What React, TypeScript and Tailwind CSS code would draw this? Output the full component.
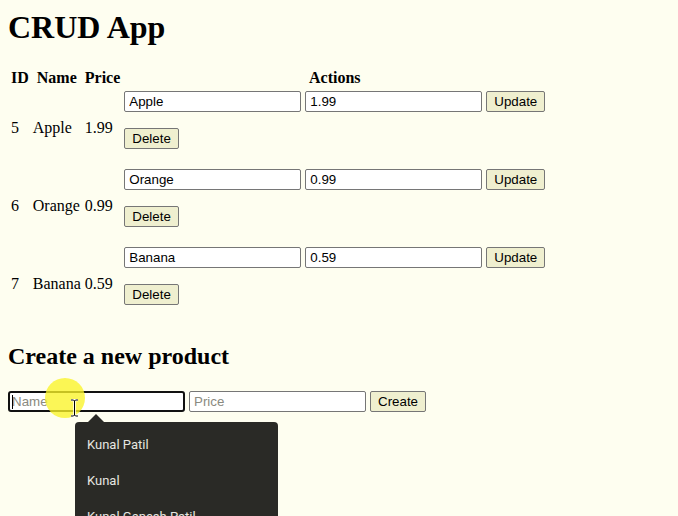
const products = [
  { id: 5, name: "Apple", price: "1.99" },
  { id: 6, name: "Orange", price: "0.99" },
  { id: 7, name: "Banana", price: "0.59" },
];

const suggestions = ["Kunal Patil", "Kunal", "Kunal Ganesh Patil"];

const field =
  "w-[177px] h-[21px] border border-[#767676] rounded-[2px] bg-white px-1 text-[13.33px] text-black font-['Liberation_Sans',Arial,sans-serif] outline-none placeholder:text-[#8a8a80]";
const btn =
  "h-[21px] border border-[#767676] rounded-[2px] bg-[#efefcf] px-[7px] text-[13.33px] leading-none text-black font-['Liberation_Sans',Arial,sans-serif]";

export default function App() {
  return (
    <main className="h-screen overflow-hidden bg-[#fefef0] pl-2 pt-[9px] text-black font-['Liberation_Serif','Times_New_Roman',serif]">
      <h1 className="text-[32px] font-bold leading-[37px]">CRUD App</h1>

      <table className="mt-5 border-separate border-spacing-0.5">
        <thead>
          <tr>
            <th className="p-px text-center font-bold leading-[18px]">ID</th>
            <th className="p-px text-center font-bold leading-[18px]">Name</th>
            <th className="p-px text-center font-bold leading-[18px]">Price</th>
            <th className="p-px text-center font-bold leading-[18px]">Actions</th>
          </tr>
        </thead>
        <tbody>
          {products.map((p) => (
            <tr key={p.id}>
              <td className="p-px align-middle leading-[18px]">{p.id}</td>
              <td className="p-px align-middle leading-[18px]">{p.name}</td>
              <td className="p-px align-middle leading-[18px]">{p.price}</td>
              <td className="p-px align-top">
                <div className="flex flex-col items-start pb-4">
                  <div className="flex gap-1">
                    <input className={field} defaultValue={p.name} />
                    <input className={field} defaultValue={p.price} />
                    <button className={btn}>Update</button>
                  </div>
                  <button className={`${btn} mt-4`}>Delete</button>
                </div>
              </td>
            </tr>
          ))}
        </tbody>
      </table>

      <h2 className="mt-[18px] text-2xl font-bold leading-7">Create a new product</h2>

      <div className="relative mt-[21px] flex gap-1">
        <input
          className="w-[177px] h-[21px] border-2 border-[#111] rounded-[3px] bg-white pl-0.5 text-[13.33px] text-black font-['Liberation_Sans',Arial,sans-serif] outline-none placeholder:text-[#8a8a80]"
          placeholder="Name"
        />
        <input className={field} placeholder="Price" />
        <button className={btn}>Create</button>

        {/* text caret */}
        <div className="absolute left-[4px] top-[4px] h-[14px] w-px bg-black" />

        {/* click highlight */}
        <div className="absolute left-[37px] top-[-13px] h-10 w-10 rounded-full bg-[rgba(250,244,40,0.78)]" />

        {/* I-beam cursor */}
        <svg className="absolute left-[62px] top-[8px]" width="9" height="18" viewBox="0 0 9 18">
          <path d="M1 1h2.5L4.5 2 5.5 1H8M4.5 2v14M1 17h2.5l1-1 1 1H8" fill="none" stroke="#fff" strokeWidth="2.5" />
          <path d="M1 1h2.5L4.5 2 5.5 1H8M4.5 2v14M1 17h2.5l1-1 1 1H8" fill="none" stroke="#000" strokeWidth="1" />
        </svg>

        {/* autocomplete dropdown */}
        <div className="absolute left-[80px] top-[23px] h-0 w-0 border-x-8 border-b-8 border-x-transparent border-b-[#2a2a26]" />
        <div className="absolute left-[67px] top-[31px] h-[130px] w-[203px] rounded-[4px] bg-[#2a2a26] pt-[5px] font-['Roboto','Noto_Sans',sans-serif] text-[13px] text-[#e6e6e0]">
          {suggestions.map((s) => (
            <div key={s} className="flex h-9 items-center px-3">
              {s}
            </div>
          ))}
        </div>
      </div>
    </main>
  );
}
